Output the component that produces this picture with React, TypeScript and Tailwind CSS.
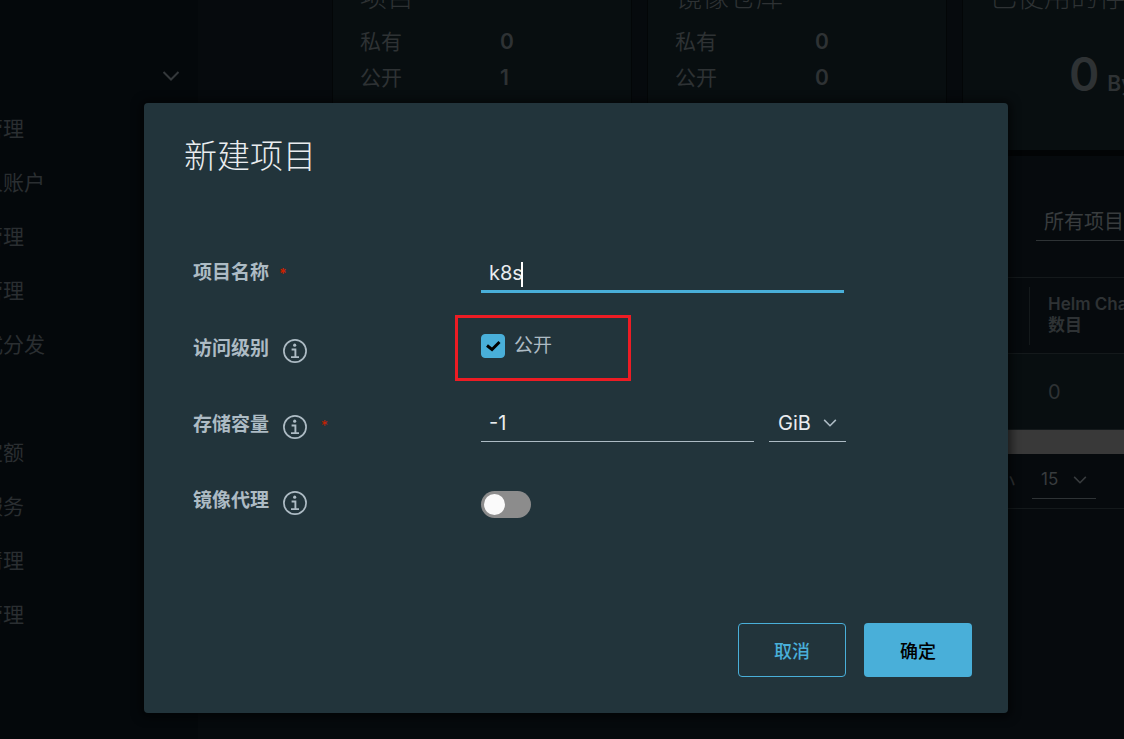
import { useState } from "react";

const menu = [
  "用户管理",
  "机器人账户",
  "仓库管理",
  "复制管理",
  "分布式分发",
  "标签",
  "项目定额",
  "审查服务",
  "垃圾清理",
  "配置管理",
];

const stats = [
  { title: "项目", rows: [["私有", "0"], ["公开", "1"]] },
  { title: "镜像仓库", rows: [["私有", "0"], ["公开", "0"]] },
];

function Chevron({ className }: { className: string }) {
  return (
    <svg viewBox="0 0 18 10" fill="none" stroke="currentColor" strokeWidth="2" className={className} aria-hidden="true">
      <path d="M1.5 1 L9 8.5 L16.5 1" />
    </svg>
  );
}

function InfoIcon() {
  return (
    <svg viewBox="0 0 24 24" fill="none" stroke="currentColor" className="mt-[3px] h-6 w-6 shrink-0" aria-hidden="true">
      <circle cx="12" cy="12" r="11.1" strokeWidth="1.7" />
      <circle cx="11.7" cy="6.2" r="1.6" fill="currentColor" stroke="none" />
      <path d="M8.6 10.5 H12.4 V18 M8 18.1 H16" strokeWidth="1.9" />
    </svg>
  );
}

function Sidebar() {
  return (
    <nav className="w-[198px] shrink-0 overflow-hidden bg-[#04080b] text-[21px] text-[#2a2e31]">
      <div className="flex h-[102px] justify-end pt-[71px] pr-[18px]">
        <Chevron className="h-[10px] w-[18px] text-[#34383b]" />
      </div>
      <ul className="-ml-[60px]">
        {menu.map((item) => (
          <li key={item} className="flex h-[54px] items-center whitespace-nowrap">
            <a href="#">{item}</a>
          </li>
        ))}
      </ul>
    </nav>
  );
}

function Dashboard() {
  return (
    <main className="min-w-0 flex-1 overflow-hidden bg-[#060a0d] text-[#2e3234]">
      <div className="flex h-[150px] gap-[15px] pl-[134px]">
        {stats.map((card) => (
          <section key={card.title} className="w-[300px] shrink-0 border-x border-[#030607] bg-[#080e10] px-[27px]">
            <h3 className="-mt-6 pb-1 text-[27px] leading-[44px] font-light">{card.title}</h3>
            {card.rows.map(([name, value]) => (
              <div key={name} className="flex h-[36px] items-center text-[21px]">
                <span className="w-[140px]">{name}</span>
                <span className="font-semibold">{value}</span>
              </div>
            ))}
          </section>
        ))}
        <section className="w-[300px] shrink-0 border-l border-[#030607] bg-[#080e10] px-[27px]">
          <h3 className="-mt-6 pb-1 text-[27px] leading-[44px] font-light">已使用的存储</h3>
          <div className="flex items-baseline gap-2 pt-[20px] pl-[79px] font-semibold">
            <span className="text-[46px] leading-[60px]">0</span>
            <span className="text-[21px]">Byte</span>
          </div>
        </section>
      </div>

      <div className="h-[6px] bg-[#020405]" />

      <div className="flex h-[121px] pt-[48px] pl-[838px]">
        <button className="flex h-[37px] w-[150px] shrink-0 items-center border-b border-[#2e3335] px-2 text-[20px] text-[#383c3e]">
          所有项目
        </button>
      </div>

      <table className="w-[1100px] table-fixed border-collapse border-y border-[#14191b] text-left">
        <thead>
          <tr className="h-[76px] border-b border-[#14191b]">
            <th className="w-[831px]" />
            <th className="p-0 text-[17px] leading-[21px] font-semibold">
              <div className="h-[58px] border-l border-[#14191b] pt-[7px] pl-[18px]">
                Helm Chart
                <br />
                数目
              </div>
            </th>
          </tr>
        </thead>
        <tbody>
          <tr className="h-[76px] bg-[#080e10]">
            <td />
            <td className="pl-[19px] text-[20px]">0</td>
          </tr>
        </tbody>
      </table>
      <div className="h-[24px] bg-[#393939]" />

      <div className="flex h-[55px] items-start border-b border-[#14191b] text-[17px]">
        <span className="w-[817px] pt-[14px] text-right text-[19px] leading-[28px]">页面大小</span>
        <button className="ml-[17px] flex h-[45px] w-[64px] items-center justify-between border-b border-[#2e3335] pt-[8px] pr-[9px] pl-[9px] text-[#383c3e]">
          15
          <Chevron className="h-[8px] w-[14px]" />
        </button>
      </div>
    </main>
  );
}

function NewProjectModal() {
  const [name, setName] = useState("k8s");
  const [isPublic, setIsPublic] = useState(true);
  const [quota, setQuota] = useState("-1");
  const [proxy, setProxy] = useState(false);

  return (
    <div className="absolute inset-0 pt-[103px] pr-[116px] pl-[144px]">
      <div
        role="dialog"
        aria-labelledby="modal-title"
        className="rounded-[4px] bg-[#22343b] pt-8 pr-9 pb-9 pl-10 text-[#adbbc4] shadow-[0_1px_8px_4px_rgba(0,0,0,0.5)]"
      >
        <h2 id="modal-title" className="text-[33px] leading-[42px] font-light text-[#e9ecef]">
          新建项目
        </h2>

        <form className="mt-[58px] pl-[9px]">
          <div className="flex h-[76px] items-center">
            <label htmlFor="name" className="flex w-[288px] items-center gap-[10px] text-[19px] font-bold">
              项目名称
              <span className="text-[14px] text-[#c92100]">*</span>
            </label>
            <div className="relative w-[363px]">
              <input
                id="name"
                value={name}
                onChange={(e) => setName(e.target.value)}
                className="h-[39px] w-full border-b-3 border-[#49afd9] bg-transparent px-2 pt-[3px] text-[20px] text-[#e9ecef] caret-transparent outline-none"
              />
              <span className="absolute top-[8px] left-[40px] h-[25px] w-[2px] bg-white" />
            </div>
          </div>

          <div className="flex h-[76px] items-center">
            <div className="flex w-[288px] items-center gap-[14px] text-[19px] font-bold">
              访问级别
              <InfoIcon />
            </div>
            <label className="relative flex h-[60px] items-center gap-[9px] pb-[6px] text-[19px]">
              <span className="relative h-6 w-6">
                <input
                  type="checkbox"
                  checked={isPublic}
                  onChange={(e) => setIsPublic(e.target.checked)}
                  className="block h-6 w-6 appearance-none rounded-[4px] border border-[#49afd9] checked:bg-[#49afd9]"
                />
                {isPublic && (
                  <svg viewBox="0 0 24 24" fill="none" stroke="#000" strokeWidth="3" className="pointer-events-none absolute inset-0">
                    <path d="M6 11.5 L11 15.5 L18.5 8" />
                  </svg>
                )}
              </span>
              公开
              {/* highlight frame around the option */}
              <span className="pointer-events-none absolute -top-[4px] -left-[26px] h-[66px] w-[176px] border-3 border-[#ed1c24]" />
            </label>
          </div>

          <div className="flex h-[76px] items-center">
            <label htmlFor="quota" className="flex w-[288px] items-center gap-[14px] text-[19px] font-bold">
              存储容量
              <InfoIcon />
              <span className="text-[14px] font-normal text-[#c92100]">*</span>
            </label>
            <input
              id="quota"
              value={quota}
              onChange={(e) => setQuota(e.target.value)}
              className="h-[34px] w-[273px] border-b border-[#adbbc4] bg-transparent px-2 pb-[3px] text-[20px] text-[#e9ecef] outline-none"
            />
            <div className="relative ml-[15px] w-[77px]">
              <select
                aria-label="存储单位"
                className="block h-[34px] w-full appearance-none border-b border-[#adbbc4] bg-transparent pb-[3px] pl-[9px] text-[20px] text-[#e9ecef] outline-none"
              >
                <option>GiB</option>
              </select>
              <Chevron className="pointer-events-none absolute top-[11px] right-[9px] h-[8px] w-[14px]" />
            </div>
          </div>

          <div className="flex h-[76px] items-center">
            <label htmlFor="proxy" className="flex w-[288px] items-center gap-[14px] text-[19px] font-bold">
              镜像代理
              <InfoIcon />
            </label>
            <input
              id="proxy"
              type="checkbox"
              role="switch"
              checked={proxy}
              onChange={(e) => setProxy(e.target.checked)}
              className="mt-[6px] flex h-[27px] w-[50px] appearance-none items-center rounded-full bg-[#8c8c8c] px-[3px] before:h-[21px] before:w-[21px] before:rounded-full before:bg-[#fafafa] checked:justify-end checked:bg-[#49afd9]"
            />
          </div>
        </form>

        <div className="mt-[84px] flex justify-end gap-[18px] text-[18px] font-medium">
          <button className="h-[54px] w-[108px] rounded-[4px] border border-[#49afd9] pt-[2px] text-[#49afd9]">取消</button>
          <button className="h-[54px] w-[108px] rounded-[4px] bg-[#49afd9] pt-[2px] text-black">确定</button>
        </div>
      </div>
    </div>
  );
}

export default function App() {
  return (
    <div className="relative flex min-h-screen overflow-hidden bg-[#04080b] font-['Inter','Noto_Sans_CJK_SC',sans-serif]">
      <Sidebar />
      <Dashboard />
      <NewProjectModal />
    </div>
  );
}
